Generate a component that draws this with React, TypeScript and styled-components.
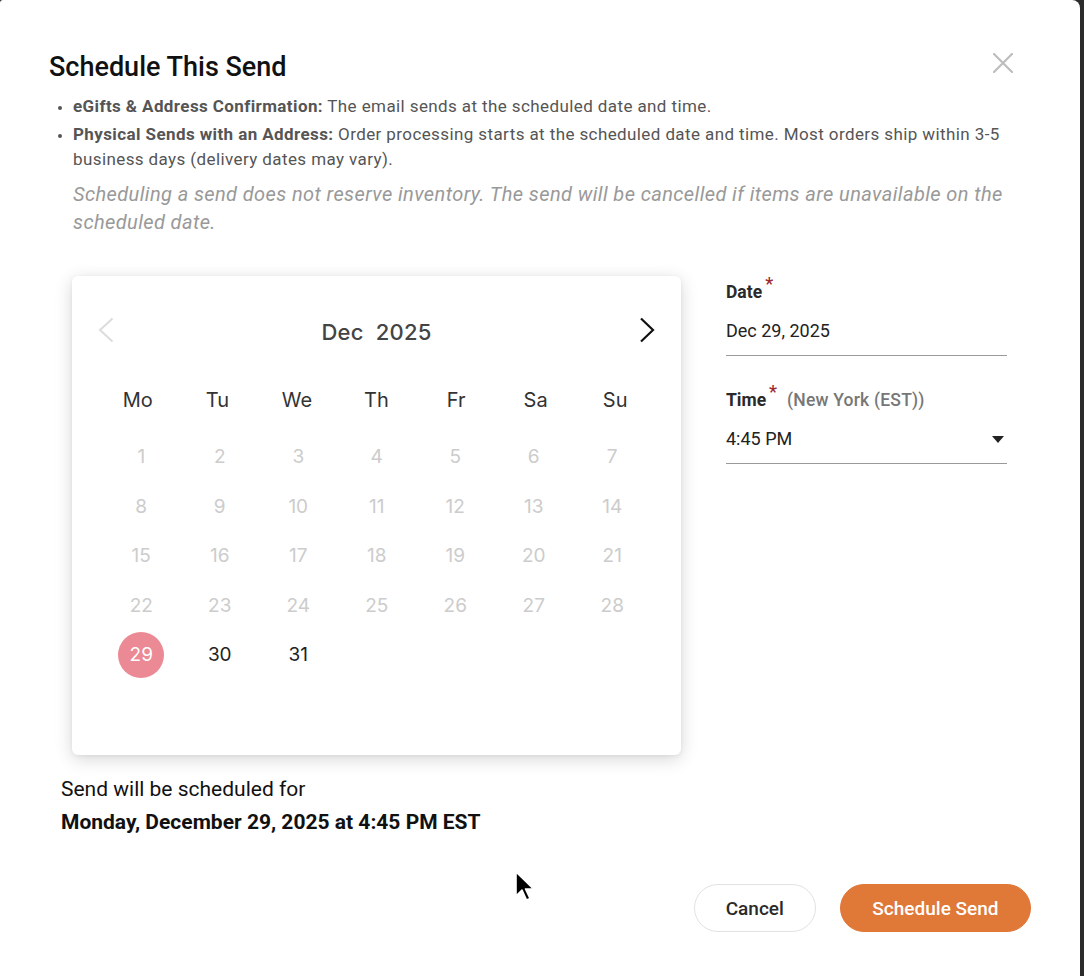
import React from "react";
import styled, { createGlobalStyle } from "styled-components";

const Global = createGlobalStyle`
  html, body { margin: 0; padding: 0; background: #2b2b2b; }
  body { font-family: Roboto, "Liberation Sans", Arial, sans-serif; }
  * { box-sizing: border-box; }
`;

const Modal = styled.div`
  position: relative;
  width: 1080px;
  height: 976px;
  background: #ffffff;
  border-radius: 3px 8px 0 0;
  padding: 50px 49px 0 49px;
  overflow: hidden;
`;

const Header = styled.div`
  display: flex;
  justify-content: space-between;
  align-items: flex-start;
  padding-right: 18px;
`;

const Title = styled.h1`
  margin: 0;
  font-size: 27px;
  line-height: 34px;
  font-weight: 500;
  color: #111;
`;

const CloseButton = styled.button`
  border: 0;
  background: none;
  padding: 0;
  margin-top: 3px;
  width: 20px;
  height: 20px;
  cursor: pointer;
  display: flex;
`;

const InfoList = styled.ul`
  margin: 10px 0 0 0;
  padding: 0 20px 0 24px;
  color: #555;
  font-size: 17px;
  letter-spacing: 0.4px;
  line-height: 25px;
`;

const InfoItem = styled.li`
  margin-bottom: 3px;
  &::marker { font-size: 14px; }
  b { font-weight: 700; }
`;

const Note = styled.p`
  margin: 8px 0 0 24px;
  padding-right: 20px;
  font-size: 20px;
  letter-spacing: 0.4px;
  line-height: 28px;
  font-style: italic;
  color: #999;
`;

const PickerRow = styled.div`
  display: flex;
  align-items: flex-start;
  gap: 45px;
  margin: 40px 0 0 23px;
`;

const CalendarCard = styled.div`
  width: 609px;
  height: 479px;
  background: #fff;
  border-radius: 6px;
  box-shadow: 0 4px 18px rgba(0, 0, 0, 0.16), 0 1px 4px rgba(0, 0, 0, 0.06);
  padding: 26px 26px 0 26px;
  font-family: Inter, "Noto Sans", sans-serif;
`;

const CalHeader = styled.div`
  height: 56px;
  display: flex;
  align-items: center;
  justify-content: space-between;
`;

const NavButton = styled.button<{ $disabled?: boolean }>`
  border: 0;
  background: none;
  padding: 0;
  width: 16px;
  height: 26px;
  display: flex;
  align-items: center;
  justify-content: center;
  color: ${(p) => (p.$disabled ? "#dcdcdc" : "#111")};
  cursor: ${(p) => (p.$disabled ? "default" : "pointer")};
`;

const MonthLabel = styled.div`
  font-size: 22px;
  font-weight: 500;
  color: #444;
  white-space: pre;
  letter-spacing: 0.2px;
  padding-top: 4px;
`;

const WeekRow = styled.div`
  display: grid;
  grid-template-columns: repeat(7, 1fr);
  margin-top: 22px;
  height: 40px;
  align-items: center;
`;

const WeekDay = styled.div`
  text-align: center;
  font-size: 20px;
  color: #333;
`;

const DayGrid = styled.div`
  display: grid;
  grid-template-columns: repeat(7, 1fr);
  grid-auto-rows: 49.5px;
  margin-top: 12px;
  padding: 0 3.5px 0 4px;
`;

const DayCell = styled.div`
  display: flex;
  align-items: center;
  justify-content: center;
`;

const Day = styled.div<{ $state: "disabled" | "normal" | "selected" }>`
  width: 46px;
  height: 46px;
  border-radius: 50%;
  display: flex;
  align-items: center;
  justify-content: center;
  font-size: 19px;
  color: ${(p) =>
    p.$state === "disabled" ? "#cccccc" : p.$state === "selected" ? "#ffffff" : "#222"};
  background: ${(p) => (p.$state === "selected" ? "#eb8994" : "transparent")};
`;

const Form = styled.div`
  width: 281px;
  display: flex;
  flex-direction: column;
`;

const Field = styled.div<{ $first?: boolean }>`
  margin-top: ${(p) => (p.$first ? "5px" : "33px")};
`;

const Label = styled.div`
  display: flex;
  align-items: baseline;
  font-size: 17.5px;
  line-height: 22px;
  font-weight: 700;
  color: #2a2a2a;
`;

const Required = styled.span`
  color: #9e2a2a;
  font-weight: 500;
  font-size: 18px;
  position: relative;
  top: -8px;
  margin-left: 3px;
`;

const Hint = styled.span`
  color: #777;
  font-weight: 500;
  margin-left: 10px;
  letter-spacing: 0.2px;
`;

const Value = styled.div`
  margin-top: 16px;
  padding-bottom: 12px;
  border-bottom: 1px solid #9a9a9a;
  display: flex;
  justify-content: space-between;
  align-items: center;
  font-size: 18px;
  line-height: 24px;
  color: #222;
`;

const Caret = styled.span`
  width: 0;
  height: 0;
  border-left: 6.5px solid transparent;
  border-right: 6.5px solid transparent;
  border-top: 7px solid #222;
  margin-right: 3px;
`;

const Summary = styled.div`
  margin: 20px 0 0 12px;
  color: #111;
  font-size: 21px;
`;

const SummaryLine = styled.div<{ $bold?: boolean }>`
  line-height: 28px;
  font-weight: ${(p) => (p.$bold ? 700 : 400)};
  margin-top: ${(p) => (p.$bold ? "5px" : "0")};
`;

const Footer = styled.div`
  display: flex;
  justify-content: flex-end;
  gap: 24px;
  margin-top: 48px;
`;

const Button = styled.button<{ $primary?: boolean }>`
  height: 48px;
  border-radius: 24px;
  padding: 0 ${(p) => (p.$primary ? "31.5px" : "31px")};
  font-family: Roboto, "Liberation Sans", Arial, sans-serif;
  font-size: 19px;
  font-weight: 500;
  cursor: pointer;
  border: 1px solid ${(p) => (p.$primary ? "#e07838" : "#e2e2e2")};
  background: ${(p) => (p.$primary ? "#e07838" : "#fff")};
  color: ${(p) => (p.$primary ? "#fff" : "#2a2a2a")};
`;

const Cursor = styled.svg`
  position: absolute;
  left: 513px;
  top: 869px;
  pointer-events: none;
`;

type DayState = "disabled" | "normal" | "selected";

const days: { n: number; s: DayState }[] = Array.from({ length: 31 }, (_, i) => {
  const n = i + 1;
  return { n, s: n < 29 ? "disabled" : n === 29 ? "selected" : "normal" };
});

const weekdays = ["Mo", "Tu", "We", "Th", "Fr", "Sa", "Su"];

export default function App() {
  return (
    <>
      <Global />
      <Modal>
        <Header>
          <Title>Schedule This Send</Title>
          <CloseButton aria-label="Close">
            <svg width="20" height="20" viewBox="0 0 20 20">
              <path d="M1 1 L19 19 M19 1 L1 19" stroke="#bdbdbd" strokeWidth="2.2" strokeLinecap="round" />
            </svg>
          </CloseButton>
        </Header>
        <InfoList>
          <InfoItem>
            <b>eGifts &amp; Address Confirmation:</b> The email sends at the scheduled date and time.
          </InfoItem>
          <InfoItem>
            <b>Physical Sends with an Address:</b> Order processing starts at the scheduled date and
            time. Most orders ship within 3-5 business days (delivery dates may vary).
          </InfoItem>
        </InfoList>
        <Note>
          Scheduling a send does not reserve inventory. The send will be cancelled if items are
          unavailable on the scheduled date.
        </Note>
        <PickerRow>
          <CalendarCard>
            <CalHeader>
              <NavButton $disabled aria-label="Previous month">
                <svg width="16" height="26" viewBox="0 0 16 26">
                  <path d="M14.5 1.5 L2 13 L14.5 24.5" fill="none" stroke="currentColor" strokeWidth="2" />
                </svg>
              </NavButton>
              <MonthLabel>{"Dec  2025"}</MonthLabel>
              <NavButton aria-label="Next month">
                <svg width="16" height="26" viewBox="0 0 16 26">
                  <path d="M2 1.5 L14 13 L2 24.5" fill="none" stroke="currentColor" strokeWidth="2.2" />
                </svg>
              </NavButton>
            </CalHeader>
            <WeekRow>
              {weekdays.map((w) => (
                <WeekDay key={w}>{w}</WeekDay>
              ))}
            </WeekRow>
            <DayGrid>
              {days.map((d) => (
                <DayCell key={d.n}>
                  <Day $state={d.s}>{d.n}</Day>
                </DayCell>
              ))}
            </DayGrid>
          </CalendarCard>
          <Form>
            <Field $first>
              <Label>
                Date<Required>*</Required>
              </Label>
              <Value>Dec 29, 2025</Value>
            </Field>
            <Field>
              <Label>
                Time<Required>*</Required>
                <Hint>(New York (EST))</Hint>
              </Label>
              <Value>
                4:45 PM
                <Caret />
              </Value>
            </Field>
          </Form>
        </PickerRow>
        <Summary>
          <SummaryLine>Send will be scheduled for</SummaryLine>
          <SummaryLine $bold>Monday, December 29, 2025 at 4:45 PM EST</SummaryLine>
        </Summary>
        <Footer>
          <Button>Cancel</Button>
          <Button $primary>Schedule Send</Button>
        </Footer>
        <Cursor width="24" height="36" viewBox="0 0 24 36">
          <path d="M3 3 L3 27 L9 21 L13.5 31 L17 29.5 L12.5 20 L20.5 20 Z" fill="#000" stroke="#fff" strokeWidth="1.6" strokeLinejoin="round" />
        </Cursor>
      </Modal>
    </>
  );
}
